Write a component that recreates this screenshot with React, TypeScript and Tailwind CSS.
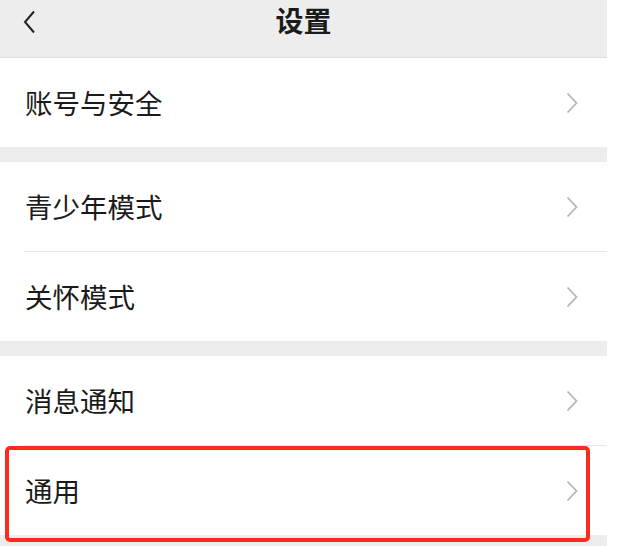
import { Fragment } from "react";

const font = { fontFamily: '"Noto Sans CJK SC", "Noto Sans", sans-serif' };

const groups: string[][] = [
  ["账号与安全"],
  ["青少年模式", "关怀模式"],
  ["消息通知", "通用"],
];

function Chevron() {
  return (
    <svg width="12" height="22" viewBox="0 0 12 22" className="shrink-0">
      <path d="M1.5 1.5 L10.5 11 L1.5 20.5" fill="none" stroke="#b5b5b5" strokeWidth="1.8" />
    </svg>
  );
}

function Row({ label, highlight }: { label: string; highlight?: boolean }) {
  return (
    <div className="relative flex h-[89px] items-center justify-between bg-white pl-[25px] pr-[29px]">
      <span className="text-[27.5px] leading-none text-[#1b1b1b]">{label}</span>
      <Chevron />
      {highlight && (
        <div className="absolute left-[5px] top-0 h-[96px] w-[585px] rounded-[5px] border-4 border-[#ff2a1f]" />
      )}
    </div>
  );
}

export default function App() {
  return (
    <div className="min-h-[546px] w-[607px] bg-[#ededed]" style={font}>
      <div className="relative flex h-[58px] justify-center border-b border-[#dedede] bg-[#ededed] pt-[6px]">
        <svg width="13" height="24" viewBox="0 0 13 24" className="absolute left-[23px] top-[10px]">
          <path d="M11 1.5 L2 12 L11 22.5" fill="none" stroke="#222" strokeWidth="2" />
        </svg>
        <span className="text-[28px] font-semibold leading-none text-[#1b1b1b]">设置</span>
      </div>
      <div className="flex flex-col gap-[15px]">
        {groups.map((g, gi) => (
          <div key={gi} className="flex flex-col bg-white">
            {g.map((label, i) => (
              <Fragment key={label}>
                {i > 0 && <div className="ml-6 h-px bg-[#e8e8e8]" />}
                <Row label={label} highlight={label === "通用"} />
              </Fragment>
            ))}
          </div>
        ))}
      </div>
    </div>
  );
}
